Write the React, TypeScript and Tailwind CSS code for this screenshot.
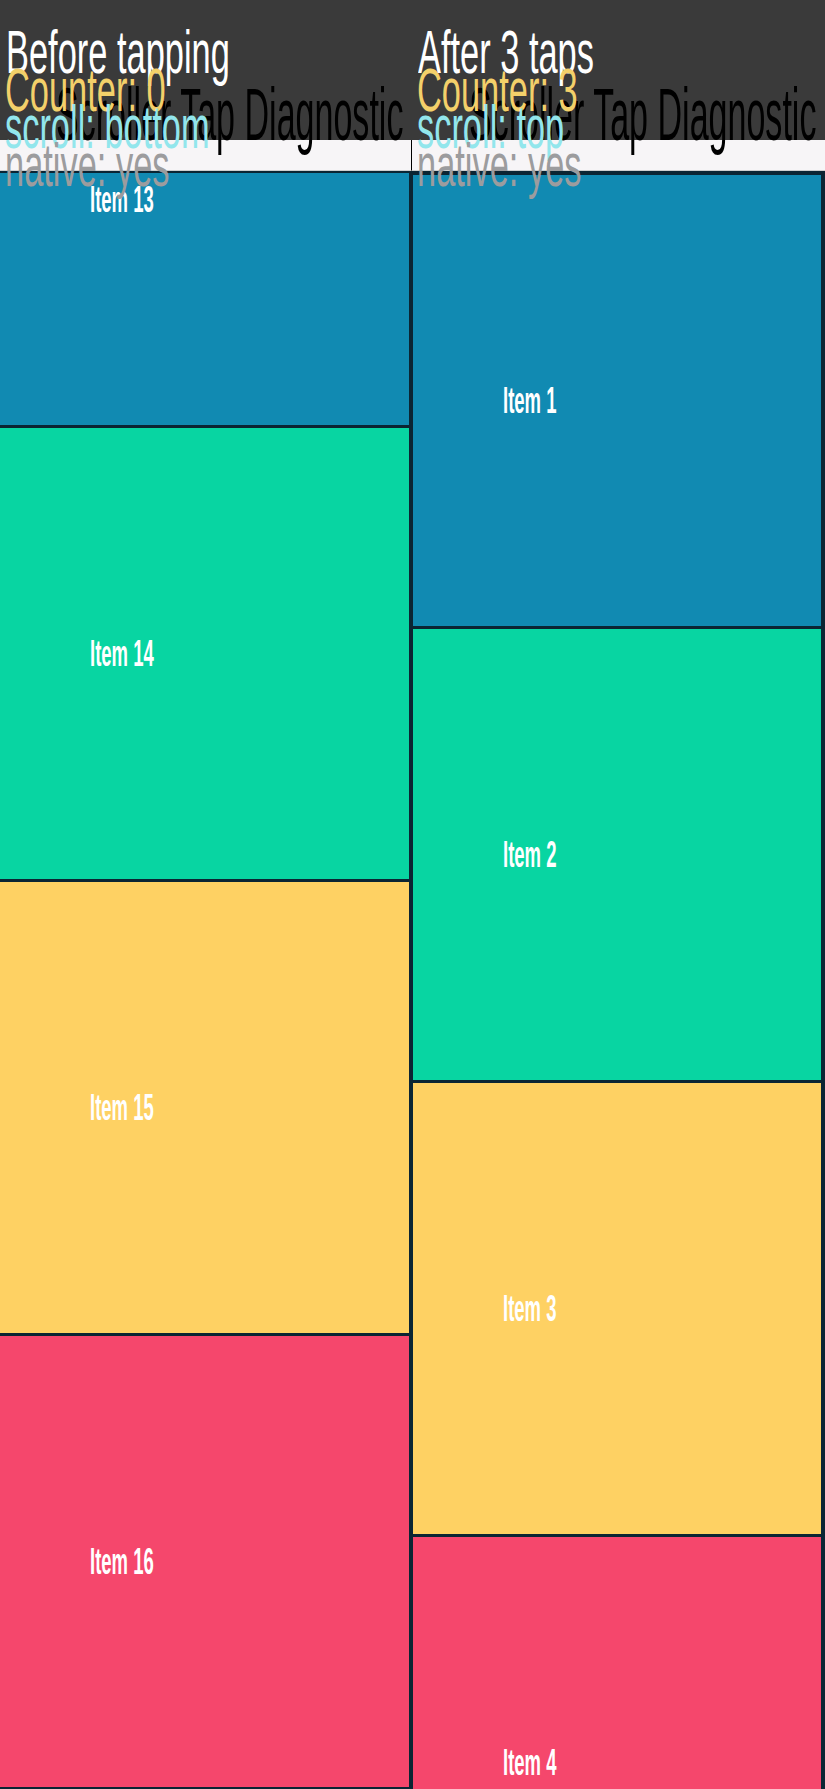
import React from "react";

type Item = { n: number; bg: string };

const leftItems: Item[] = [
  { n: 13, bg: "bg-[#118ab2]" },
  { n: 14, bg: "bg-[#08d5a2]" },
  { n: 15, bg: "bg-[#fed163]" },
  { n: 16, bg: "bg-[#f5476c]" },
];

const rightItems: Item[] = [
  { n: 1, bg: "bg-[#118ab2]" },
  { n: 2, bg: "bg-[#08d5a2]" },
  { n: 3, bg: "bg-[#fed163]" },
  { n: 4, bg: "bg-[#f5476c]" },
];

function Cell({ item, first, offset }: { item: Item; first?: boolean; offset?: boolean }) {
  return (
    <div
      className={`h-[454px] shrink-0 border-b-[3px] border-[#0b2533] ${item.bg} flex items-center pl-[90px] ${
        first && offset ? "-mt-[199px]" : ""
      }`}
    >
      <span className="inline-block origin-left scale-x-[0.5] text-[37px] font-bold leading-none text-white whitespace-nowrap">
        Item {item.n}
      </span>
    </div>
  );
}

function Column({
  title,
  counter,
  scroll,
  items,
  scrolledToBottom,
  divider,
}: {
  title: string;
  counter: number;
  scroll: string;
  items: Item[];
  scrolledToBottom?: boolean;
  divider?: boolean;
}) {
  return (
    <div className={`relative flex h-full flex-col ${divider ? "w-[412px]" : "flex-1"}`}>
      <div className="h-[140px] shrink-0 bg-[#3a3a3a]" />
      <div
        className={`h-[31px] shrink-0 bg-[#f7f5f7] border-b border-[#cfcfcf] ${
          divider ? "border-r border-r-black" : ""
        }`}
      />
      <div
        className={`flex flex-1 flex-col overflow-hidden border-[#0b2533] bg-[#0b2533] ${
          divider ? "border-t-2 border-r-[3px]" : "border-t-[4px] border-l border-r-[4px]"
        }`}
      >
        {items.map((it, i) => (
          <Cell key={it.n} item={it} first={i === 0} offset={scrolledToBottom} />
        ))}
      </div>

      <div className="pointer-events-none absolute inset-0 z-10 font-['Liberation_Sans',Arial,sans-serif]">
        <div className="absolute right-[9px] top-[78px] origin-right scale-x-[0.46] whitespace-nowrap text-[74px] leading-none text-black">
          Scroller Tap Diagnostic
        </div>
        <div className="absolute left-[6px] top-[21px] origin-left scale-x-[0.555] whitespace-nowrap text-[62px] leading-none text-white">
          {title}
        </div>
        <div className="absolute left-[5px] top-[59px] origin-left scale-x-[0.555] whitespace-nowrap text-[62px] leading-none text-[#f3d06a]">
          Counter: {counter}
        </div>
        <div className="absolute left-[5px] top-[96px] origin-left scale-x-[0.555] whitespace-nowrap text-[62px] leading-none text-[#92e6ec]">
          scroll: {scroll}
        </div>
        <div className="absolute left-[5px] top-[134px] origin-left scale-x-[0.555] whitespace-nowrap text-[62px] leading-none text-[#9c9c9e]">
          native: yes
        </div>
      </div>
    </div>
  );
}

export default function App() {
  return (
    <div className="flex h-[1789px] w-[825px] overflow-hidden bg-[#0b2533] font-['Liberation_Sans',Arial,sans-serif]">
      <Column
        title="Before tapping"
        counter={0}
        scroll="bottom"
        items={leftItems}
        scrolledToBottom
        divider
      />
      <Column title="After 3 taps" counter={3} scroll="top" items={rightItems} />
    </div>
  );
}
